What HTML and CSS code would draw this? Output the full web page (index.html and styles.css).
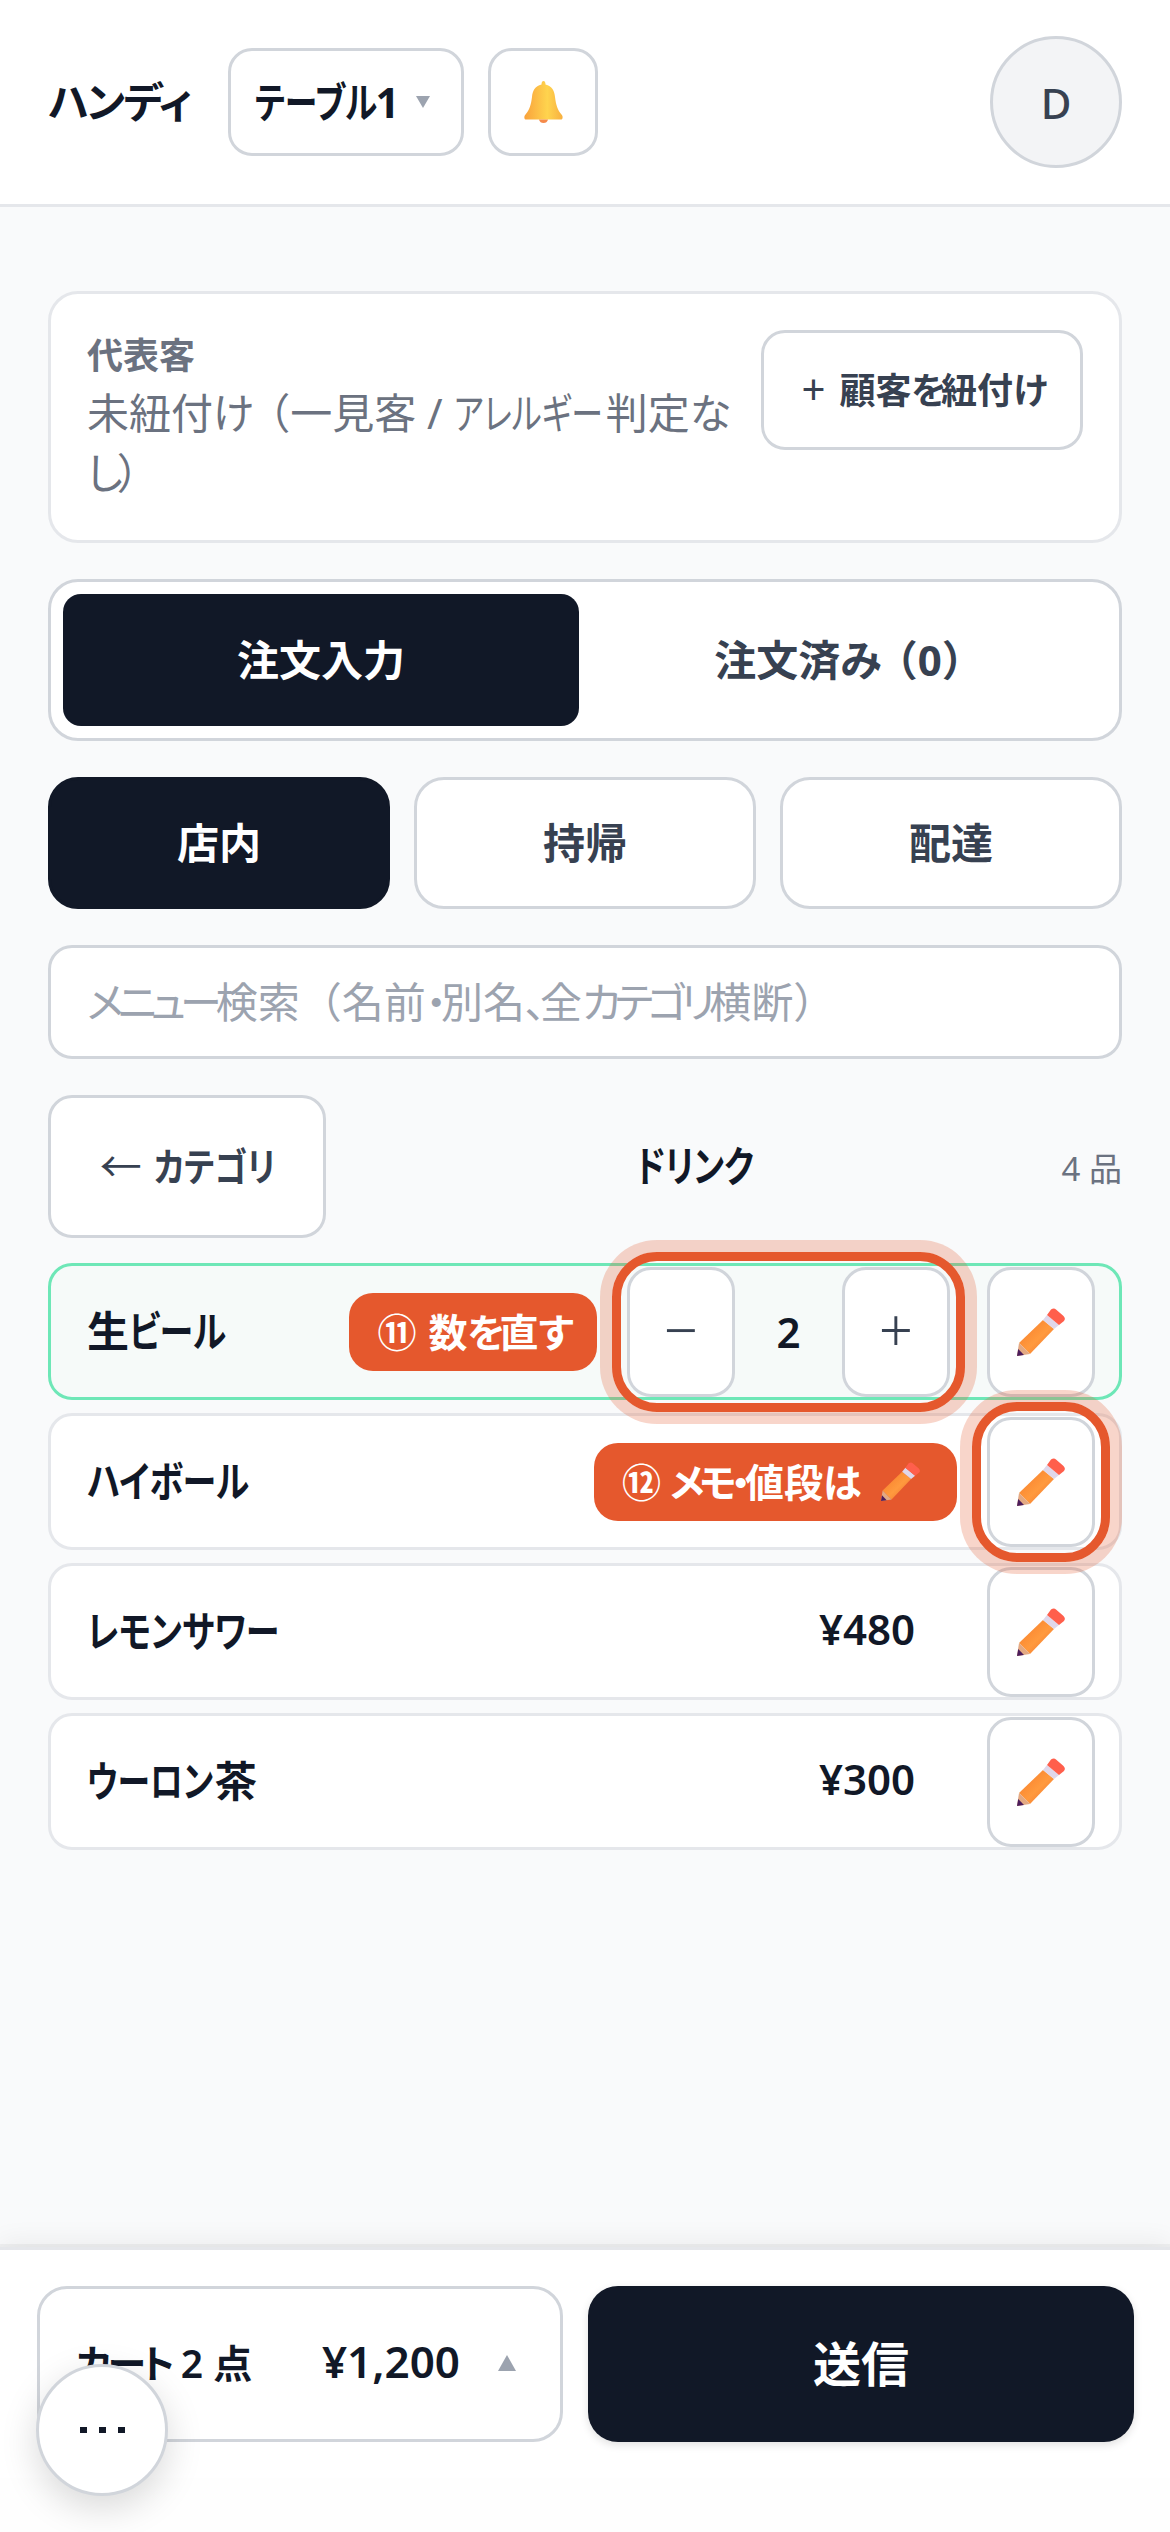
FILE: index.html
```html
<!DOCTYPE html>
<html lang="ja">
<head>
    <meta charset="UTF-8">
    <title>ハンディ</title>
    <link rel="stylesheet" href="styles.css">
</head>
<body>
    <svg class="defs" width="0" height="0">
        <defs>
            <linearGradient id="bellFill" x1="0" y1="0" x2="1" y2="0">
                <stop offset="0" stop-color="#f9a23c"/>
                <stop offset="0.6" stop-color="#ffd44e"/>
                <stop offset="1" stop-color="#f8b040"/>
            </linearGradient>
            <linearGradient id="pencilFill" x1="0" y1="0" x2="1" y2="1">
                <stop offset="0" stop-color="#f77a28"/>
                <stop offset="0.55" stop-color="#ff9a3e"/>
                <stop offset="1" stop-color="#f06c2a"/>
            </linearGradient>
            <symbol id="pencil" viewBox="0 0 48 48">
                <path d="M26 12 37 21 13 46 2 35Z" fill="url(#pencilFill)"/>
                <path d="M2 35 13 46 0 48Z" fill="#e3a983"/>
                <path d="M1.200 41 7 47 0 48Z" fill="#4c1d5c"/>
                <path d="M30 7 42 17 37 21 26 12Z" fill="#e0d7ea"/>
                <path d="M34 1.500Q37-.5 39 1.500L46.500 8Q49 10.500 47 13L42 17 30 7Z" fill="#ff5f4c"/>
            </symbol>
        </defs>
    </svg>

    <header class="topbar">
        <span class="brand"><span class="kana">ハンディ</span></span>
        <button class="table-select"><span><span class="narrow">テーブル</span>1</span><i class="caret"></i></button>
        <button class="bell-btn">
            <svg width="39" height="42" viewBox="0 0 39 42">
                <path d="M19.500 0Q21.500 0 21.500 3.500C28 5 30.500 10 31 16 32 24 33.500 29 37.500 33.500 39 35 39 38 37.500 38.500H1.500C0 38 0 35 1.500 33.500 5.500 29 7 24 8 16 8.500 10 11 5 17.500 3.500Q17.500 0 19.500 0Z" fill="url(#bellFill)"/>
                <path d="M15 38.500H24Q23 42 19.500 42 16 42 15 38.500Z" fill="#f58a4a"/>
            </svg>
        </button>
        <span class="avatar">D</span>
    </header>

    <main class="content">
        <section class="customer-card">
            <div class="customer-info">
                <div class="customer-label">代表客</div>
                <div class="customer-value">未紐付<span class="kana">け</span>（一見客 / <span class="narrow">アレルギー</span>判定<span class="kana">な</span><br><span class="kana">し</span>）</div>
            </div>
            <button class="link-btn"><span class="plus">+</span><span>顧客<span class="kana">を</span>紐付<span class="kana">け</span></span></button>
        </section>

        <div class="tabs">
            <button class="tab active">注文入力</button>
            <button class="tab">注文済<span class="kana">み</span>（0）</button>
        </div>

        <div class="modes">
            <button class="mode active">店内</button>
            <button class="mode">持帰</button>
            <button class="mode">配達</button>
        </div>

        <div class="search"><span><span class="kana">メニュー</span>検索（名前<span class="kana">・</span>別名<span class="kana">、</span>全<span class="kana">カテゴリ</span>横断）</span></div>

        <div class="category-bar">
            <button class="back-btn"><span class="arrow">←</span><span class="narrow">カテゴリ</span></button>
            <span class="category-name"><span class="narrow">ドリンク</span></span>
            <span class="category-count">4 品</span>
        </div>

        <div class="items">
            <div class="item selected">
                <span class="item-name">生<span class="narrow">ビール</span></span>
                <span class="hint"><span>⑪</span><span>数<span class="kana">を</span>直<span class="kana">す</span></span></span>
                <div class="stepper">
                    <button class="step-btn">−</button>
                    <span class="qty">2</span>
                    <button class="step-btn">+</button>
                    <i class="ring"></i>
                </div>
                <div class="edit-wrap">
                    <button class="edit-btn"><svg class="pencil"><use href="#pencil"/></svg></button>
                </div>
            </div>
            <div class="item">
                <span class="item-name"><span class="narrow">ハイボール</span></span>
                <span class="hint with-icon"><span>⑫</span><span class="hint-text"><span class="kana">メモ・</span>値段<span class="kana">は</span></span><svg class="pencil-small"><use href="#pencil"/></svg></span>
                <div class="edit-wrap">
                    <button class="edit-btn"><svg class="pencil"><use href="#pencil"/></svg></button>
                    <i class="ring"></i>
                </div>
            </div>
            <div class="item">
                <span class="item-name"><span class="narrow">レモンサワー</span></span>
                <span class="price">¥480</span>
                <div class="edit-wrap">
                    <button class="edit-btn"><svg class="pencil"><use href="#pencil"/></svg></button>
                </div>
            </div>
            <div class="item">
                <span class="item-name"><span class="narrow">ウーロン</span>茶</span>
                <span class="price">¥300</span>
                <div class="edit-wrap">
                    <button class="edit-btn"><svg class="pencil"><use href="#pencil"/></svg></button>
                </div>
            </div>
        </div>
    </main>

    <footer class="cart-bar">
        <button class="cart-btn">
            <span><span class="kana">カート</span> 2 点</span>
            <span class="cart-total">¥1,200</span>
            <i class="caret-up"></i>
        </button>
        <button class="send-btn">送信</button>
    </footer>
    <div class="foot-gap"></div>

    <button class="fab"><i></i><i></i><i></i></button>
</body>
</html>
```

FILE: styles.css
```css
/* Base */
* {
    box-sizing: border-box;
}

body {
    margin: 0;
    width: 1170px;
    height: 2532px;
    display: flex;
    flex-direction: column;
    position: relative;
    overflow: hidden;
    background-color: #f9fafb;
    color: #111827;
    font-family: "Noto Sans", "Noto Sans CJK JP", sans-serif;
}

button {
    font-family: inherit;
    background-color: #fff;
    border: 3px solid #d1d5db;
    border-radius: 24px;
    padding: 0 0 6px;
    color: #374151;
}

.defs {
    position: absolute;
}

/* the reference font has narrow kana, so squeeze those runs */
.kana {
    font-feature-settings: "palt";
    letter-spacing: -0.14em;
}

/* longer runs would touch with letter-spacing alone */
.narrow {
    display: inline-block;
    font-feature-settings: "palt";
    transform: scaleX(0.81);
    transform-origin: 0 50%;
}

/* Header */
.topbar {
    height: 207px;
    flex: none;
    display: flex;
    align-items: center;
    gap: 24px;
    padding: 0 48px;
    background-color: #fff;
    border-bottom: 3px solid #e5e7eb;
}

.brand {
    width: 156px;
    padding-bottom: 6px;
    font-size: 42px;
    font-weight: 700;
    white-space: nowrap;
}

.brand .kana {
    letter-spacing: -0.04em;
}

.table-select {
    width: 236px;
    height: 108px;
    display: flex;
    align-items: center;
    gap: 16px;
    padding-left: 24px;
    font-size: 42px;
    font-weight: 700;
    color: #111827;
    white-space: nowrap;
}

.table-select .narrow {
    transform: scaleX(0.78);
    margin-right: -36px;
}

.caret {
    width: 0;
    height: 0;
    margin-top: 6px;
    border-left: 7px solid transparent;
    border-right: 7px solid transparent;
    border-top: 12px solid #9ca3af;
}

.bell-btn {
    width: 110px;
    height: 108px;
    display: flex;
    align-items: center;
    justify-content: center;
    padding: 0;
}

.avatar {
    width: 132px;
    height: 132px;
    margin-left: auto;
    display: flex;
    align-items: center;
    justify-content: center;
    border-radius: 50%;
    border: 3px solid #d1d5db;
    background-color: #f3f4f6;
    color: #374151;
    font-size: 42px;
    font-weight: 500;
}

/* Content */
.content {
    flex: 1;
    display: flex;
    flex-direction: column;
    gap: 36px;
    padding: 84px 48px 0;
}

.customer-card {
    height: 252px;
    display: flex;
    gap: 24px;
    padding: 35px 36px;
    background-color: #fff;
    border: 3px solid #e5e7eb;
    border-radius: 30px;
}

.customer-info {
    flex: 1;
    min-width: 0;
    white-space: nowrap;
}

.customer-label {
    font-size: 36px;
    font-weight: 700;
    line-height: 54px;
    color: #6b7280;
}

.customer-value {
    font-size: 42px;
    line-height: 60px;
    color: #6b7280;
}

.customer-value .narrow {
    transform: scaleX(0.76);
    margin-right: -44px;
}

.link-btn {
    width: 322px;
    height: 120px;
    margin-top: 1px;
    flex: none;
    display: flex;
    align-items: center;
    justify-content: center;
    gap: 14px;
    padding-bottom: 4px;
    font-size: 36px;
    font-weight: 700;
}

.plus {
    font-weight: 400;
    font-size: 42px;
}

.tabs {
    height: 162px;
    display: flex;
    gap: 12px;
    padding: 12px;
    background-color: #fff;
    border: 3px solid #d1d5db;
    border-radius: 30px;
}

.tab {
    flex: 1;
    border: 0;
    border-radius: 18px;
    font-size: 42px;
    font-weight: 700;
    background: none;
}

.tab.active,
.mode.active {
    background-color: #111827;
    border-color: #111827;
    color: #fff;
}

.modes {
    height: 132px;
    display: grid;
    grid-template-columns: repeat(3, 1fr);
    gap: 24px;
}

.mode {
    border-radius: 30px;
    font-size: 42px;
    font-weight: 700;
}

.search {
    height: 114px;
    display: flex;
    align-items: center;
    padding: 0 36px 6px;
    background-color: #fff;
    border: 3px solid #d1d5db;
    border-radius: 24px;
    font-size: 42px;
    color: #9ca3af;
}

.category-bar {
    height: 143px;
    display: flex;
    justify-content: space-between;
    align-items: center;
}

.back-btn {
    width: 278px;
    height: 100%;
    display: flex;
    align-items: center;
    justify-content: center;
    gap: 12px;
    font-size: 39px;
    font-weight: 700;
}

.back-btn .narrow {
    transform: scaleX(0.84);
    margin-right: -24px;
}

.arrow {
    font-weight: 400;
    font-size: 42px;
}

.category-name {
    padding-bottom: 6px;
    font-size: 42px;
    font-weight: 700;
}

.category-name .narrow {
    transform: scaleX(0.79);
    margin-right: -33px;
}

.category-count {
    font-size: 33px;
    color: #6b7280;
}

/* Item rows */
.items {
    display: flex;
    flex-direction: column;
    gap: 13px;
    margin-top: -11px;
}

.item {
    height: 137px;
    display: flex;
    align-items: center;
    padding: 0 24px 0 36px;
    background-color: #fff;
    border: 3px solid #e5e7eb;
    border-radius: 24px;
}

.item.selected {
    background-color: #f6faf9;
    border-color: #6ee7b7;
}

.item-name {
    padding-bottom: 6px;
    font-size: 42px;
    font-weight: 700;
    margin-right: auto;
    white-space: nowrap;
}

.item:nth-child(4) .narrow {
    transform: scaleX(0.78);
    margin-right: -34px;
}

.hint {
    height: 78px;
    display: flex;
    align-items: center;
    gap: 12px;
    padding: 0 29px 4px 28px;
    margin-right: 30px;
    background-color: #e5582d;
    border-radius: 24px;
    color: #fff;
    font-size: 39px;
    font-weight: 700;
    white-space: nowrap;
}

.hint.with-icon {
    gap: 14px;
    padding-right: 37px;
}

.hint-text {
    margin-left: -5px;
}

.price {
    padding-bottom: 6px;
    font-size: 42px;
    font-weight: 600;
    margin-right: 72px;
}

.stepper {
    width: 323px;
    height: 130px;
    display: flex;
    align-items: center;
    justify-content: space-between;
    position: relative;
    margin-right: 37px;
}

.step-btn {
    width: 108px;
    height: 130px;
    font-size: 60px;
    font-weight: 300;
}

.qty {
    font-size: 42px;
    font-weight: 600;
}

.edit-wrap {
    position: relative;
}

.edit-btn {
    width: 108px;
    height: 130px;
    display: flex;
    align-items: center;
    justify-content: center;
    padding: 0;
}

.pencil {
    width: 48px;
    height: 48px;
}

.pencil-small {
    width: 39px;
    height: 39px;
    margin: 4px 0 0 11px;
}

/* Highlight around the tutorial target */
.ring {
    position: absolute;
    inset: -15px;
    border: 9px solid #e5582d;
    border-radius: 45px;
    box-shadow: 0 0 0 12px rgba(229, 88, 45, 0.25);
    pointer-events: none;
    z-index: 2;
}

/* Cart bar */
.cart-bar {
    height: 231px;
    flex: none;
    display: flex;
    gap: 25px;
    padding: 36px 36px 0 37px;
    background-color: #fff;
    border-top: 3px solid #e5e7eb;
    box-shadow: 0 -3px 0 rgba(0, 0, 0, 0.04), 0 -6px 24px rgba(0, 0, 0, 0.06);
}

.foot-gap {
    height: 54px;
    flex: none;
    background-color: #fefefe;
}

.cart-btn {
    width: 526px;
    height: 156px;
    display: flex;
    align-items: center;
    padding: 0 44px 6px 36px;
    border-radius: 30px;
    font-size: 39px;
    font-weight: 600;
    color: #111827;
}

.cart-btn .kana {
    letter-spacing: -0.1em;
}

.cart-total {
    margin-left: auto;
    font-size: 44px;
}

.caret-up {
    width: 0;
    height: 0;
    margin: 4px 0 0 38px;
    border-left: 9px solid transparent;
    border-right: 9px solid transparent;
    border-bottom: 16px solid #9ca3af;
}

.send-btn {
    flex: 1;
    height: 156px;
    border: 0;
    border-radius: 30px;
    background-color: #111827;
    color: #fff;
    font-size: 48px;
    font-weight: 700;
    box-shadow: 0 3px 9px rgba(0, 0, 0, 0.12);
}

.fab {
    position: absolute;
    left: 36px;
    top: 2364px;
    width: 132px;
    height: 132px;
    display: flex;
    align-items: center;
    justify-content: center;
    gap: 12px;
    padding: 0;
    border-radius: 50%;
    box-shadow: 0 12px 36px rgba(0, 0, 0, 0.15);
}

.fab i {
    width: 7px;
    height: 6px;
    background-color: #111827;
}
```
